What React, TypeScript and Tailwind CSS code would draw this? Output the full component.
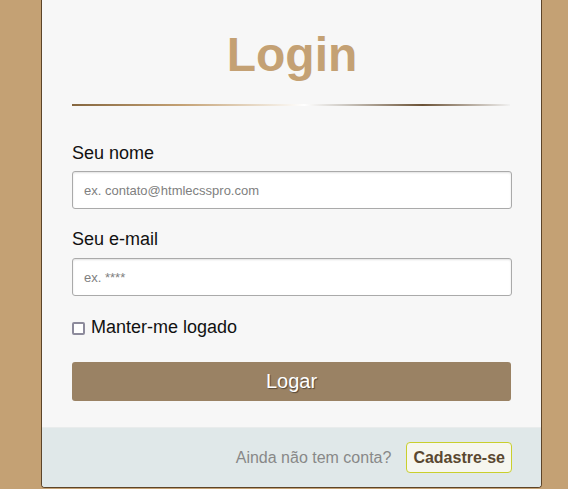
import { useState } from 'react'

const Login = () => {
  const [nome, setNome] = useState('')
  const [email, setEmail] = useState('')
  const [lembrar, setLembrar] = useState(false)

  return (
    <div className="w-[501px] h-[488px] flex flex-col bg-[#f7f7f7] border border-t-0 border-[#5c4429] rounded-b-[4px] overflow-hidden">
      <form
        className="flex-1 flex flex-col pl-[30px] pr-[29px] pt-[31px]"
        onSubmit={(event) => event.preventDefault()}
      >
        <h1 className="text-center text-[48px] leading-[48px] font-bold text-[#c4a174]">
          Login
        </h1>

        {/* linha decorativa */}
        <div className="mt-[25px] h-[2px] w-[438px] bg-[linear-gradient(to_right,#85663f_0%,#c4a174_25%,#eee4d6_45%,#ffffff_53%,#cfcbc5_62%,#6b5236_80%,#f2f2f2_100%)]" />

        <label className="mt-[38px] text-[18px] leading-[18px] text-[#111]">Seu nome</label>
        <input
          className="mt-[9px] h-[38px] w-[440px] px-[11px] bg-white border border-[#aaa] rounded-[3px] shadow-[inset_0_1px_2px_rgba(0,0,0,0.12)] text-[13px] placeholder:text-[#808080] outline-none"
          placeholder="ex. contato@htmlecsspro.com"
          value={nome}
          onChange={(event) => setNome(event.target.value)}
        />

        <label className="mt-[21px] text-[18px] leading-[18px] text-[#111]">Seu e-mail</label>
        <input
          className="mt-[10px] h-[38px] w-[440px] px-[11px] bg-white border border-[#aaa] rounded-[3px] shadow-[inset_0_1px_2px_rgba(0,0,0,0.12)] text-[13px] placeholder:text-[#808080] outline-none"
          placeholder="ex. ****"
          type="password"
          value={email}
          onChange={(event) => setEmail(event.target.value)}
        />

        <label
          className="mt-[22px] flex items-center gap-[6px] text-[18px] leading-[18px] text-[#111] cursor-pointer"
          onClick={() => setLembrar(!lembrar)}
        >
          <span className="mt-[2px] w-[13px] h-[13px] border-2 border-[#8d8b9c] rounded-[2px] bg-white flex items-center justify-center">
            {lembrar && <span className="w-[5px] h-[5px] bg-[#8d8b9c]" />}
          </span>
          Manter-me logado
        </label>

        <button
          className="mt-[26px] h-[39px] w-[439px] rounded-[3px] bg-[#9a8264] text-white text-[20px] leading-[39px] [text-shadow:1px_1px_1px_rgba(0,0,0,0.45)]"
          type="submit"
        >
          Logar
        </button>
      </form>

      <div className="h-[60px] flex items-center justify-end gap-[15px] pr-[29px] bg-[#e0e8e9] border-t border-[#e9ecec]">
        <span className="text-[16px] text-[#888]">Ainda não tem conta?</span>
        <button className="h-[31px] px-[6px] bg-[#f6f6ef] border border-[#c9cf2d] rounded-[4px] text-[16px] font-bold text-[#5a4830]">
          Cadastre-se
        </button>
      </div>
    </div>
  )
}

export default function App() {
  return (
    <div className="w-full h-[489px] bg-[#c4a174] pl-[41px] font-['Liberation_Sans',Arial,sans-serif]">
      <Login />
    </div>
  )
}
